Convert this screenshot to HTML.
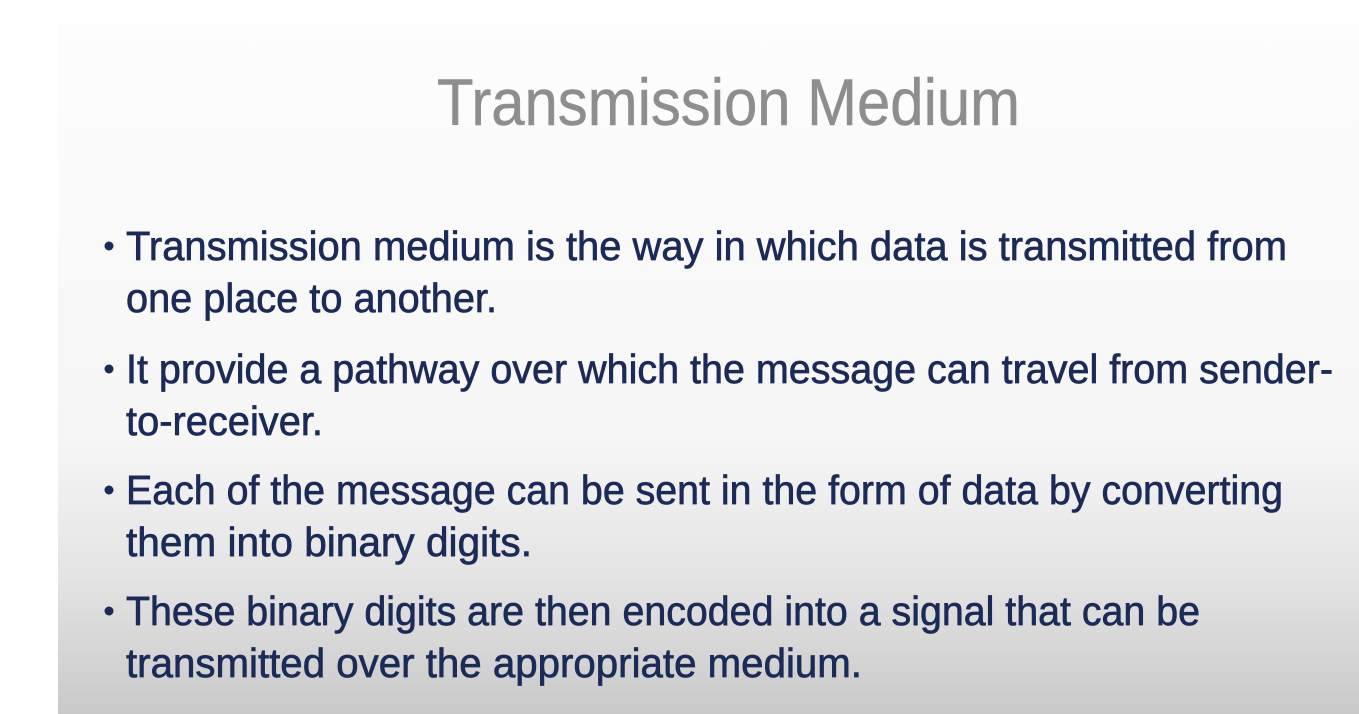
<!DOCTYPE html>
<html><head><meta charset="utf-8"><style>
html,body{margin:0;padding:0;width:1359px;height:714px;overflow:hidden;background:#fff}
svg{display:block}
</style></head><body>
<svg width="1359" height="714" xmlns="http://www.w3.org/2000/svg">
<defs>
<linearGradient id="g" x1="0" y1="0" x2="0" y2="1">
<stop offset="0" stop-color="#fdfdfd"/>
<stop offset="0.6" stop-color="#f6f6f6"/>
<stop offset="0.8" stop-color="#e4e4e4"/>
<stop offset="1" stop-color="#c9c9c9"/>
</linearGradient>
</defs>
<rect x="58" y="23" width="1301" height="691" fill="url(#g)"/>
<text x="437" y="125" font-family="Liberation Sans, sans-serif" font-size="66" fill="#8e8e90" stroke="#8e8e90" stroke-width="0.5" textLength="583" lengthAdjust="spacingAndGlyphs">Transmission Medium</text>
<g fill="#1c2a58">
<circle cx="109" cy="246" r="4.5"/>
<circle cx="109" cy="369" r="4.5"/>
<circle cx="109" cy="490" r="4.5"/>
<circle cx="109" cy="611" r="4.5"/>
</g>
<g font-family="Liberation Sans, sans-serif" font-size="41" fill="#1c2a58" stroke="#1c2a58" stroke-width="0.7">
<text x="126" y="260" textLength="1161" lengthAdjust="spacingAndGlyphs">Transmission medium is the way in which data is transmitted from</text>
<text x="126" y="312" textLength="371" lengthAdjust="spacingAndGlyphs">one place to another.</text>
<text x="126" y="383" textLength="1207" lengthAdjust="spacingAndGlyphs">It provide a pathway over which the message can travel from sender-</text>
<text x="126" y="435" textLength="197" lengthAdjust="spacingAndGlyphs">to-receiver.</text>
<text x="126" y="504" textLength="1157" lengthAdjust="spacingAndGlyphs">Each of the message can be sent in the form of data by converting</text>
<text x="126" y="556" textLength="406" lengthAdjust="spacingAndGlyphs">them into binary digits.</text>
<text x="126" y="625" textLength="1074" lengthAdjust="spacingAndGlyphs">These binary digits are then encoded into a signal that can be</text>
<text x="126" y="677" textLength="736" lengthAdjust="spacingAndGlyphs">transmitted over the appropriate medium.</text>
</g>
</svg>
</body></html>
